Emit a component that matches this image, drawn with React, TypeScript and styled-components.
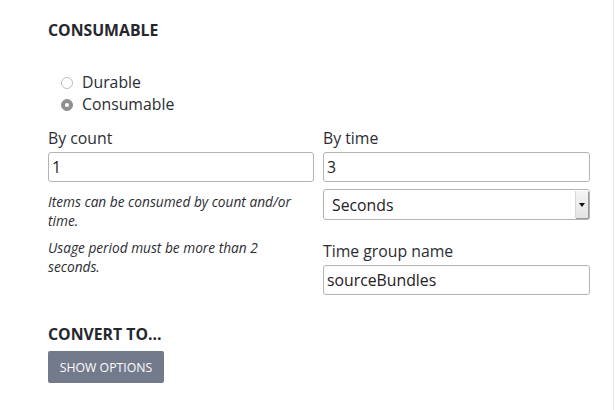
import React from 'react';
import styled, { createGlobalStyle } from 'styled-components';

const Global = createGlobalStyle`
  html, body { margin: 0; padding: 0; background: #fff; }
  body { font-family: "Open Sans", "Noto Sans", sans-serif; color: #2b2d33; }
`;

const Page = styled.div`
  width: 614px;
  height: 410px;
  border-right: 1px solid #e6e6e6;
  padding: 20px 0 0 48px;
  box-sizing: border-box;
`;

const Heading = styled.div`
  font-size: 15.8px;
  font-weight: 700;
  line-height: 20px;
  color: #25272d;
`;

const RadioGroup = styled.div`
  display: flex;
  flex-direction: column;
  margin: 31px 0 0 13px;
`;

const RadioRow = styled.label`
  display: flex;
  align-items: center;
  gap: 9px;
  font-size: 15.8px;
  line-height: 22px;
  color: #2b2d33;
`;

const RadioDot = styled.span<{ $checked?: boolean }>`
  width: 12px;
  height: 12px;
  border-radius: 50%;
  box-sizing: border-box;
  border: 1px solid ${p => (p.$checked ? '#8f8f8f' : '#bdbdbd')};
  background: ${p => (p.$checked ? '#8f8f8f' : '#fff')};
  display: flex;
  align-items: center;
  justify-content: center;
  margin-top: 2px;
  &::after {
    content: '';
    width: 4px;
    height: 4px;
    border-radius: 50%;
    background: ${p => (p.$checked ? '#fff' : 'transparent')};
  }
`;

const Columns = styled.div`
  display: grid;
  grid-template-columns: 266px 267px;
  column-gap: 9px;
  margin-top: 12px;
`;

const Col = styled.div`
  display: flex;
  flex-direction: column;
`;

const Label = styled.div<{ $top?: number }>`
  font-size: 15.8px;
  line-height: 22px;
  margin-top: ${p => p.$top ?? 0}px;
  margin-bottom: 3px;
  color: #2b2d33;
`;

const Input = styled.div`
  height: 30px;
  box-sizing: border-box;
  border: 1px solid #b3b3b3;
  border-radius: 3px;
  padding: 0 3px;
  display: flex;
  align-items: center;
  font-size: 15.8px;
  color: #1f2024;
`;

const Select = styled.div`
  height: 31px;
  margin-top: 7px;
  box-sizing: border-box;
  border: 1px solid #b3b3b3;
  border-radius: 3px;
  display: flex;
  align-items: stretch;
  font-size: 15.8px;
  color: #1f2024;
`;

const SelectText = styled.div`
  flex: 1;
  display: flex;
  align-items: center;
  padding-left: 8px;
`;

const SelectButton = styled.div`
  width: 12px;
  margin: 1px 1px 1px 0;
  background: linear-gradient(#f4f4f4, #e4e4e4);
  border-left: 1px solid #d6d6d6;
  box-shadow: 1px 1px 0 #9a9a9a;
  display: flex;
  align-items: center;
  justify-content: center;
  &::after {
    content: '';
    border-left: 3px solid transparent;
    border-right: 3px solid transparent;
    border-top: 4px solid #111;
  }
`;

const Help = styled.p<{ $top?: number }>`
  margin: ${p => p.$top ?? 0}px 0 0 0;
  max-width: 250px;
  font-size: 13.7px;
  font-style: italic;
  line-height: 19px;
  color: #2b2d33;
`;

const SubHeading = styled(Heading)`
  margin-top: 29px;
`;

const Button = styled.button`
  margin-top: 7px;
  width: 116px;
  height: 32px;
  border: none;
  border-radius: 2px;
  background: #737a8c;
  color: #fff;
  font-family: "Open Sans", "Noto Sans", sans-serif;
  font-size: 12.3px;
  padding: 0;
`;

export default function App() {
  return (
    <>
      <Global />
      <Page>
        <Heading>CONSUMABLE</Heading>
        <RadioGroup>
          <RadioRow><RadioDot />Durable</RadioRow>
          <RadioRow><RadioDot $checked />Consumable</RadioRow>
        </RadioGroup>
        <Columns>
          <Col>
            <Label>By count</Label>
            <Input>1</Input>
            <Help $top={10}>Items can be consumed by count and/or time.</Help>
            <Help $top={8}>Usage period must be more than 2 seconds.</Help>
          </Col>
          <Col>
            <Label>By time</Label>
            <Input>3</Input>
            <Select>
              <SelectText>Seconds</SelectText>
              <SelectButton />
            </Select>
            <Label $top={20}>Time group name</Label>
            <Input>sourceBundles</Input>
          </Col>
        </Columns>
        <SubHeading>CONVERT TO...</SubHeading>
        <Button>SHOW OPTIONS</Button>
      </Page>
    </>
  );
}
